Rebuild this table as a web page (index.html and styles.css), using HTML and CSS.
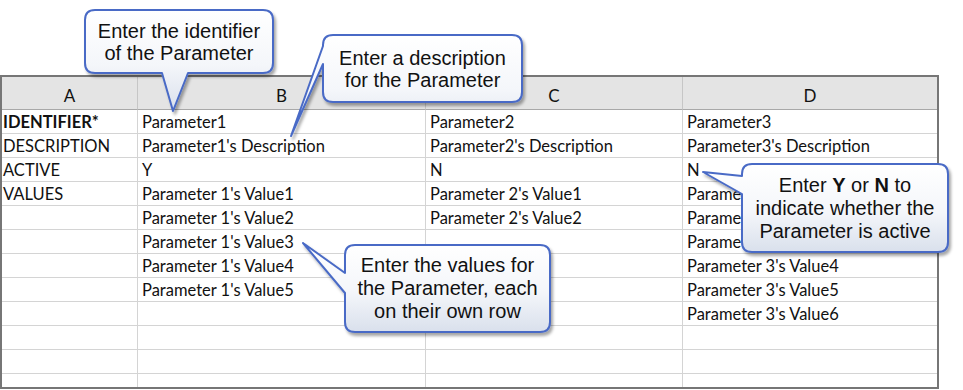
FILE: index.html
```html
<!DOCTYPE html>
<html lang="en">
<head>
    <meta charset="UTF-8">
    <title>Parameter Import Sheet</title>
    <link rel="stylesheet" href="styles.css">
</head>
<body>
    <div class="page">
        <!-- Spreadsheet -->
        <div class="sheet">
            <div class="head">A</div>
            <div class="head">B</div>
            <div class="head">C</div>
            <div class="head last">D</div>

            <div class="cell key">IDENTIFIER*</div>
            <div class="cell">Parameter1</div>
            <div class="cell">Parameter2</div>
            <div class="cell last">Parameter3</div>

            <div class="cell">DESCRIPTION</div>
            <div class="cell">Parameter1's Description</div>
            <div class="cell">Parameter2's Description</div>
            <div class="cell last">Parameter3's Description</div>

            <div class="cell">ACTIVE</div>
            <div class="cell">Y</div>
            <div class="cell">N</div>
            <div class="cell last">N</div>

            <div class="cell">VALUES</div>
            <div class="cell">Parameter 1's Value1</div>
            <div class="cell">Parameter 2's Value1</div>
            <div class="cell last">Parameter 3's Value1</div>

            <div class="cell"></div>
            <div class="cell">Parameter 1's Value2</div>
            <div class="cell">Parameter 2's Value2</div>
            <div class="cell last">Parameter 3's Value2</div>

            <div class="cell"></div>
            <div class="cell">Parameter 1's Value3</div>
            <div class="cell"></div>
            <div class="cell last">Parameter 3's Value3</div>

            <div class="cell"></div>
            <div class="cell">Parameter 1's Value4</div>
            <div class="cell"></div>
            <div class="cell last">Parameter 3's Value4</div>

            <div class="cell"></div>
            <div class="cell">Parameter 1's Value5</div>
            <div class="cell"></div>
            <div class="cell last">Parameter 3's Value5</div>

            <div class="cell"></div>
            <div class="cell"></div>
            <div class="cell"></div>
            <div class="cell last">Parameter 3's Value6</div>

            <div class="cell"></div><div class="cell"></div><div class="cell"></div><div class="cell last"></div>
            <div class="cell"></div><div class="cell"></div><div class="cell"></div><div class="cell last"></div>
            <div class="cell"></div><div class="cell"></div><div class="cell"></div><div class="cell last"></div>
            <div class="cell"></div><div class="cell"></div><div class="cell"></div><div class="cell last"></div>
        </div>

        <!-- Callout shapes -->
        <svg class="callouts" width="963" height="390" viewBox="0 0 963 390">
            <defs>
                <linearGradient id="calloutFill" x1="0" y1="0" x2="0" y2="1">
                    <stop offset="0" stop-color="#ffffff"/>
                    <stop offset="0.55" stop-color="#f4f6fa"/>
                    <stop offset="1" stop-color="#d9e0ec"/>
                </linearGradient>
                <filter id="calloutShadow" x="-10%" y="-10%" width="130%" height="140%">
                    <feDropShadow dx="2" dy="3" stdDeviation="1.5" flood-color="#000" flood-opacity="0.35"/>
                </filter>
            </defs>
            <g fill="url(#calloutFill)" stroke="#4a6bc6" stroke-width="2" stroke-linejoin="round" filter="url(#calloutShadow)">
                <path d="M95,10 H263 Q273,10 273,20 V63 Q273,73 263,73 H188 L173,111 L162,73 H95 Q85,73 85,63 V20 Q85,10 95,10 Z"/>
                <path d="M333,35 H512 Q522,35 522,45 V92 Q522,102 512,102 H333 Q323,102 323,92 V64 L291,136 L323,46 V45 Q323,35 333,35 Z"/>
                <path d="M355,245 H540 Q550,245 550,255 V322 Q550,332 540,332 H355 Q345,332 345,322 V293 L303,243 L345,273 V255 Q345,245 355,245 Z"/>
                <path d="M752,164 H938 Q948,164 948,174 V242 Q948,252 938,252 H752 Q742,252 742,242 V194 L703,172 L742,176 V174 Q742,164 752,164 Z"/>
            </g>
        </svg>

        <div class="note note-id"><p>Enter the identifier<br>of the Parameter</p></div>
        <div class="note note-desc"><p>Enter a description<br>for the Parameter</p></div>
        <div class="note note-values"><p>Enter the values for<br>the Parameter, each<br>on their own row</p></div>
        <div class="note note-active"><p>Enter <b>Y</b> or <b>N</b> to<br>indicate whether the<br>Parameter is active</p></div>
    </div>
</body>
</html>
```

FILE: styles.css
```css
body {
    margin: 0;
    background-color: #fff;
    font-family: Lato, "Liberation Sans", sans-serif;
}

.page {
    position: relative;
    width: 963px;
    height: 390px;
    overflow: hidden;
}

.sheet {
    position: relative;
    top: 75px;
    box-sizing: border-box;
    width: 939px;
    height: 314px;
    overflow: hidden;
    border: 2px solid #767676;
    display: grid;
    grid-template-columns: 136px 288px 257px 1fr;
    grid-auto-rows: 24px;
    grid-template-rows: 33px;
    color: #111;
    font-size: 16.5px;
}

.head {
    background-color: #e4e4e4;
    border-right: 1px solid #c6c6c6;
    border-bottom: 1px solid #a8a8a8;
    display: flex;
    align-items: center;
    justify-content: center;
    font-size: 17px;
    padding-top: 4px;
    box-sizing: border-box;
}

.cell {
    border-right: 1px solid #d4d4d4;
    border-bottom: 1px solid #d4d4d4;
    display: flex;
    align-items: center;
    padding-left: 4px;
    padding-top: 1px;
    white-space: nowrap;
    overflow: hidden;
}

.cell:nth-child(4n+1) {
    padding-left: 1px;
}

.last {
    border-right: none;
}

.key {
    font-weight: bold;
}

.callouts {
    position: absolute;
    left: 0;
    top: 0;
}

.note {
    position: absolute;
    display: flex;
    align-items: center;
    justify-content: center;
    text-align: center;
    font-family: "Liberation Sans", Arial, sans-serif;
    font-size: 20px;
    line-height: 22px;
    color: #111;
}

.note p {
    margin: 0;
}

.note-id {
    left: 85px;
    top: 10px;
    width: 188px;
    height: 63px;
}

.note-desc {
    left: 323px;
    top: 35px;
    width: 199px;
    height: 67px;
}

.note-values {
    left: 345px;
    top: 245px;
    width: 205px;
    height: 87px;
    line-height: 23px;
}

.note-active {
    left: 742px;
    top: 164px;
    width: 206px;
    height: 88px;
    line-height: 23px;
}
```
